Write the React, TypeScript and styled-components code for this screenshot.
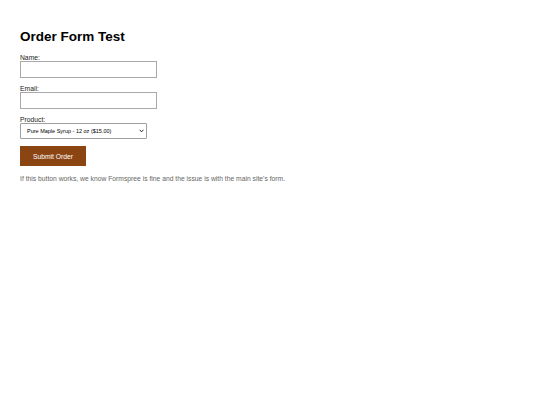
import styled, { createGlobalStyle } from 'styled-components';

const GlobalStyle = createGlobalStyle`
  html, body {
    margin: 0;
    padding: 0;
    background: #fff;
  }
  body {
    font-family: "Liberation Sans", Arial, sans-serif;
    color: #000;
  }
`;

const Page = styled.div`
  padding: 29px 20px;
`;

const Title = styled.h1`
  margin: 0 0 9px;
  font-size: 13.5px;
  line-height: 16px;
  font-weight: bold;
  color: #000;
`;

const Form = styled.form`
  display: flex;
  flex-direction: column;
  align-items: flex-start;
`;

const Field = styled.div`
  display: flex;
  flex-direction: column;
  align-items: flex-start;
  margin-bottom: 7px;
`;

const Label = styled.label`
  display: block;
  font-size: 6.75px;
  line-height: 7px;
  color: #1a1a1a;
`;

const TextInput = styled.input`
  display: block;
  box-sizing: border-box;
  width: 137px;
  height: 17px;
  margin: 0;
  padding: 0 3px;
  border: 1px solid #a9a9a9;
  border-radius: 0;
  background: #fff;
  font-family: inherit;
  font-size: 6.75px;
  outline: none;
`;

const SelectWrap = styled.div`
  position: relative;
  width: 127px;
  height: 16px;
`;

const Select = styled.select`
  display: block;
  appearance: none;
  -webkit-appearance: none;
  box-sizing: border-box;
  width: 100%;
  height: 100%;
  margin: 0;
  padding: 0 12px 0 6px;
  border: 1px solid #a0a0a0;
  border-radius: 1px;
  background: #fff;
  color: #000;
  font-family: inherit;
  font-size: 5.5px;
  outline: none;
`;

const Chevron = styled.svg`
  position: absolute;
  right: 3px;
  top: 6px;
  width: 5px;
  height: 4px;
  pointer-events: none;
`;

const SubmitButton = styled.button`
  box-sizing: border-box;
  width: 66px;
  height: 20px;
  margin: 0 0 9px;
  padding: 0;
  border: none;
  background: #8b4513;
  color: #fff;
  font-family: inherit;
  font-size: 6.75px;
  cursor: pointer;
`;

const Note = styled.p`
  margin: 0;
  font-size: 6.75px;
  line-height: 8px;
  color: #666;
`;

const products = [
  'Pure Maple Syrup - 12 oz ($15.00)',
  'Pure Maple Syrup - 32 oz ($30.00)',
  'Maple Candy ($8.00)',
];

export default function App() {
  return (
    <Page>
      <GlobalStyle />
      <Title>Order Form Test</Title>
      <Form onSubmit={(e) => e.preventDefault()}>
        <Field>
          <Label htmlFor="name">Name:</Label>
          <TextInput id="name" type="text" name="name" />
        </Field>
        <Field>
          <Label htmlFor="email">Email:</Label>
          <TextInput id="email" type="email" name="email" />
        </Field>
        <Field>
          <Label htmlFor="product">Product:</Label>
          <SelectWrap>
            <Select id="product" name="product" defaultValue={products[0]}>
              {products.map((p) => (
                <option key={p} value={p}>{p}</option>
              ))}
            </Select>
            <Chevron viewBox="0 0 5 4">
              <path d="M0.6 0.8 L2.5 2.8 L4.4 0.8" fill="none" stroke="#222" strokeWidth="1" />
            </Chevron>
          </SelectWrap>
        </Field>
        <SubmitButton type="submit">Submit Order</SubmitButton>
      </Form>
      <Note>
        If this button works, we know Formspree is fine and the issue is with the main site's form.
      </Note>
    </Page>
  );
}
